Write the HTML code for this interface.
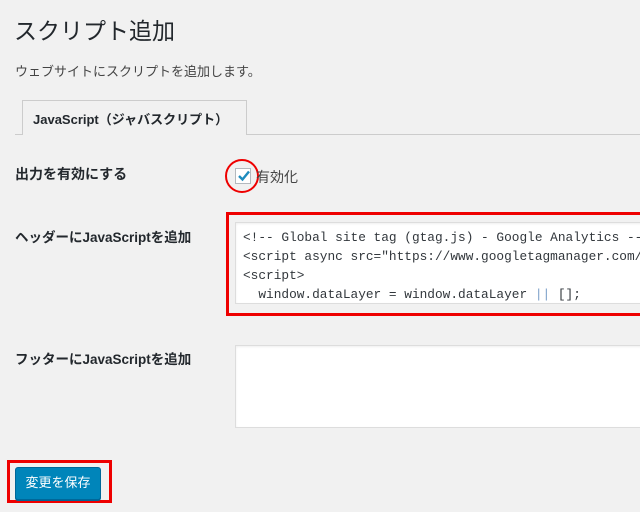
<!DOCTYPE html>
<html><head><meta charset="utf-8"><style>
body{margin:0;width:640px;height:512px;background:#f1f1f1;overflow:hidden;position:relative;font-family:"Liberation Sans","Noto Sans CJK JP",sans-serif;color:#23282d}
.a{position:absolute;white-space:nowrap}
h1{position:absolute;left:14px;top:12px;margin:0;font-size:23px;font-weight:400;color:#23282d}
.ta{position:absolute;background:#fff;border:1px solid #ddd;box-shadow:inset 0 1px 2px rgba(0,0,0,.07)}
pre{margin:0;font-family:"Liberation Mono","DejaVu Sans Mono",monospace;font-size:12.8px;line-height:19px;color:#32373c}
.lab{font-size:14px;font-weight:bold;color:#23282d}
</style></head><body>
<h1>スクリプト追加</h1>
<div class="a" style="left:15px;top:61px;font-size:13px;color:#444">ウェブサイトにスクリプトを追加します。</div>
<div class="a" style="left:15px;top:134px;width:625px;height:1px;background:#ccc"></div>
<div class="a" style="left:22px;top:100px;width:225px;height:35px;border:1px solid #ccc;border-bottom:none;background:#f1f1f1;box-sizing:border-box"></div>
<div class="a" style="left:33px;top:109px;font-size:13px;font-weight:bold;color:#23282d">JavaScript（ジャバスクリプト）</div>
<div class="a lab" style="left:15px;top:164px">出力を有効にする</div>
<div class="a" style="left:235px;top:168px;width:16px;height:16px;border:1px solid #b4b9be;background:#fff;box-sizing:border-box"></div>
<svg class="a" style="left:235px;top:167px" width="18" height="18"><path d="M4 9 L7.5 12.5 L14 4.5" stroke="#1e8cbe" stroke-width="2.4" fill="none"/></svg>
<div class="a" style="left:225px;top:159px;width:34px;height:34px;border:2px solid #e00;border-radius:50%;box-sizing:border-box"></div>
<div class="a" style="left:256px;top:167px;font-size:14px;color:#444">有効化</div>
<div class="a lab" style="left:15px;top:226px;font-size:13.5px">ヘッダーにJavaScriptを追加</div>
<div class="a" style="left:226px;top:212px;width:420px;height:104px;border:3px solid #e00;box-sizing:border-box"></div>
<div class="ta" style="left:235px;top:222px;width:410px;height:80px;overflow:hidden"><pre style="padding:5px 0 0 7px">&lt;!-- Global site tag (gtag.js) - Google Analytics --&gt;
&lt;script async src="https://www.googletagmanager.com/gtag
&lt;script&gt;
  window.dataLayer = window.dataLayer <span style="color:#7a9ec8">||</span> [];</pre></div>
<div class="a lab" style="left:15px;top:348px;font-size:13.5px">フッターにJavaScriptを追加</div>
<div class="ta" style="left:235px;top:345px;width:410px;height:81px"></div>
<div class="a" style="left:7px;top:460px;width:105px;height:43px;border:3px solid #e00;box-sizing:border-box"></div>
<div class="a" style="left:15px;top:467px;width:86px;height:33px;background:#0085ba;border:1px solid #006799;border-radius:3px;box-sizing:border-box;color:#fff;font-size:13px;text-align:center;line-height:30px;box-shadow:0 1px 0 #006799">変更を保存</div>
</body></html>
